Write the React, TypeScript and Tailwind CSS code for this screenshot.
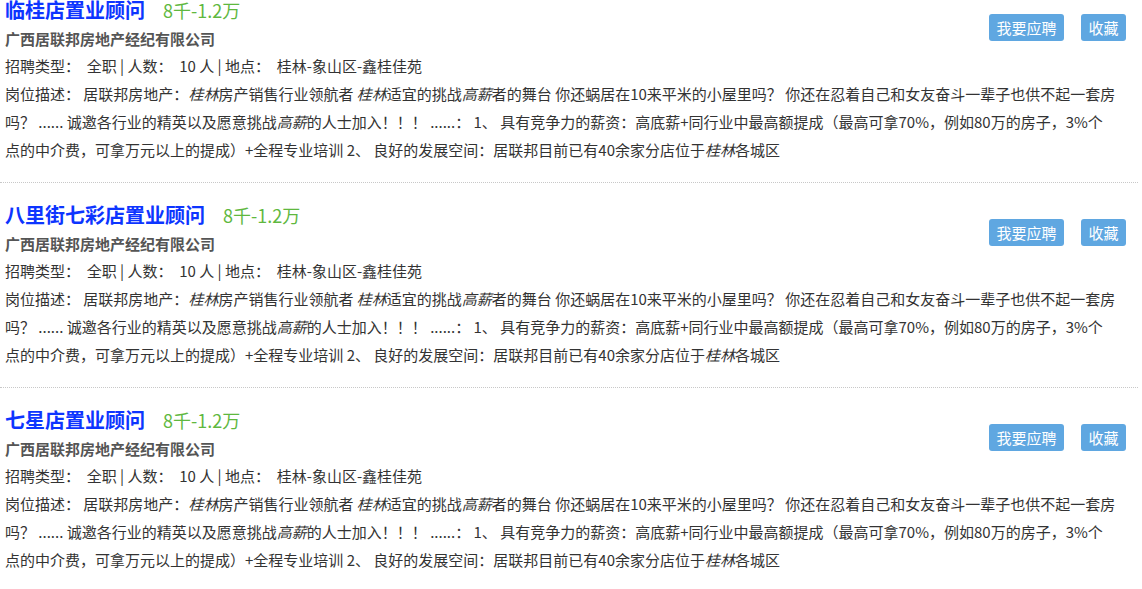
import React from 'react';

interface Job {
  title: string;
  salary: string;
}

const jobs: Job[] = [
  { title: '临桂店置业顾问', salary: '8千-1.2万' },
  { title: '八里街七彩店置业顾问', salary: '8千-1.2万' },
  { title: '七星店置业顾问', salary: '8千-1.2万' },
];

function JobItem({ job }: { job: Job }) {
  return (
    <div className="border-b border-dotted border-[#c8c8c8] pt-[17px] pb-[18px] px-[5px]">
      <div className="float-right mt-[19px] mr-[7px] flex gap-[17px]">
        <button className="w-[75px] h-[27px] rounded-[3px] bg-[#5fa7e1] text-white text-[15px] leading-[27px] text-center">
          我要应聘
        </button>
        <button className="w-[45px] h-[27px] rounded-[3px] bg-[#5fa7e1] text-white text-[15px] leading-[27px] text-center">
          收藏
        </button>
      </div>

      <div className="h-[30px] flex items-center gap-[18px]">
        <span className="text-[20px] font-bold text-[#0d35ff]">{job.title}</span>
        <span className="text-[18px] text-[#5fb83f]">{job.salary}</span>
      </div>

      <div className="h-[27px] leading-[27px] text-[15px] font-bold text-[#555]">
        广西居联邦房地产经纪有限公司
      </div>

      <div className="leading-[28px] text-[15px] text-[#333] whitespace-pre">
        {'招聘类型：  全职 | 人数：  10 人 | 地点：  桂林-象山区-鑫桂佳苑'}
      </div>

      <div className="leading-[28px] text-[15px] text-[#333] whitespace-nowrap">
        {'岗位描述：  居联邦房地产：'}<em>桂林</em>房产销售行业领航者 <em>桂林</em>适宜的挑战<em>高薪</em>者的舞台 你还蜗居在10来平米的小屋里吗？ 你还在忍着自己和女友奋斗一辈子也供不起一套房
        <br />
        吗？ ...... 诚邀各行业的精英以及愿意挑战<em>高薪</em>的人士加入！！！ ......： 1、 具有竞争力的薪资：高底薪+同行业中最高额提成（最高可拿70%，例如80万的房子，3%个
        <br />
        点的中介费，可拿万元以上的提成）+全程专业培训 2、 良好的发展空间：居联邦目前已有40余家分店位于<em>桂林</em>各城区
      </div>
    </div>
  );
}

export default function App() {
  return (
    <div className="w-[1142px] h-[589px] overflow-hidden bg-white font-['Noto_Sans_CJK_SC',sans-serif]">
      <div className="w-[1138px] -mt-[22px]">
        {jobs.map((job, i) => (
          <JobItem key={i} job={job} />
        ))}
      </div>
    </div>
  );
}
